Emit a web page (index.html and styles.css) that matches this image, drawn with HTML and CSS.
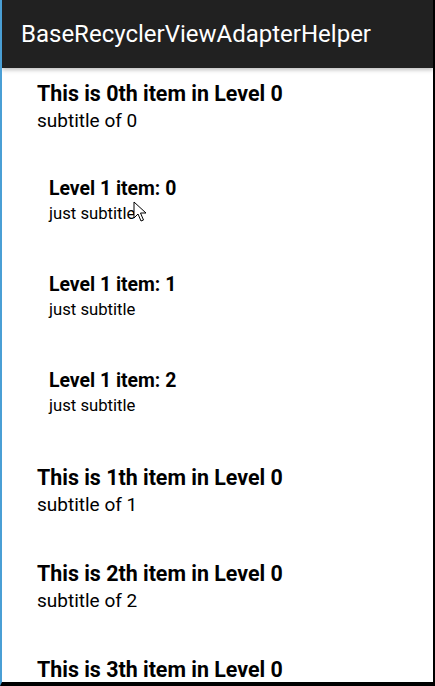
FILE: index.html
```html
<!DOCTYPE html>
<html>
<head>
<meta charset="utf-8">
<link rel="stylesheet" href="styles.css">
</head>
<body>
<div class="frame">
  <header class="appbar"><span class="appbar-title">BaseRecyclerViewAdapterHelper</span></header>
  <main class="list">
    <div class="item lvl0"><div class="title">This is 0th item in Level 0</div><div class="sub">subtitle of 0</div></div>
    <div class="item lvl1"><div class="title">Level 1 item: 0</div><div class="sub">just subtitle</div>
      <svg class="cursor" width="14" height="22" viewBox="0 0 14 22"><path d="M1 1 L1 17 L5 13 L8 20 L10.5 19 L7.5 12 L13 12 Z" fill="#fff" stroke="#000" stroke-width="1"/></svg>
    </div>
    <div class="item lvl1"><div class="title">Level 1 item: 1</div><div class="sub">just subtitle</div></div>
    <div class="item lvl1"><div class="title">Level 1 item: 2</div><div class="sub">just subtitle</div></div>
    <div class="item lvl0"><div class="title">This is 1th item in Level 0</div><div class="sub">subtitle of 1</div></div>
    <div class="item lvl0"><div class="title">This is 2th item in Level 0</div><div class="sub">subtitle of 2</div></div>
    <div class="item lvl0"><div class="title">This is 3th item in Level 0</div><div class="sub">subtitle of 3</div></div>
  </main>
</div>
</body>
</html>
```
FILE: styles.css
```css
html, body { margin: 0; padding: 0; }
body { width: 435px; height: 686px; overflow: hidden; background: #000; font-family: Roboto, "Noto Sans", sans-serif; }
.frame {
  box-sizing: border-box;
  width: 435px; height: 686px;
  border-left: 2px solid #4a9fd5;
  border-right: 2px solid #000;
  border-bottom: 4px solid #000;
  background: #fff;
  display: flex; flex-direction: column;
  overflow: hidden;
}
.appbar {
  flex: 0 0 68px;
  background: #212121;
  display: flex; align-items: center;
  padding-left: 19px;
  box-shadow: 0 2px 4px rgba(0,0,0,0.25);
  position: relative; z-index: 1;
}
.appbar-title { color: #fff; font-size: 24px; }
.list { flex: 1; overflow: hidden; }
.item { height: 96px; box-sizing: border-box; position: relative; }
.lvl0 { padding: 12px 0 0 35px; }
.lvl1 { padding: 13px 0 0 47px; }
.title { font-weight: bold; color: #000; }
.lvl0 .title { font-size: 21.4px; line-height: 27px; }
.lvl0 .sub { font-size: 19px; line-height: 27px; color: #000; }
.lvl1 .title { font-size: 19.4px; line-height: 24px; }
.lvl1 .sub { font-size: 16.7px; line-height: 25px; color: #000; }
.cursor { position: absolute; left: 131px; top: 37px; }
```
